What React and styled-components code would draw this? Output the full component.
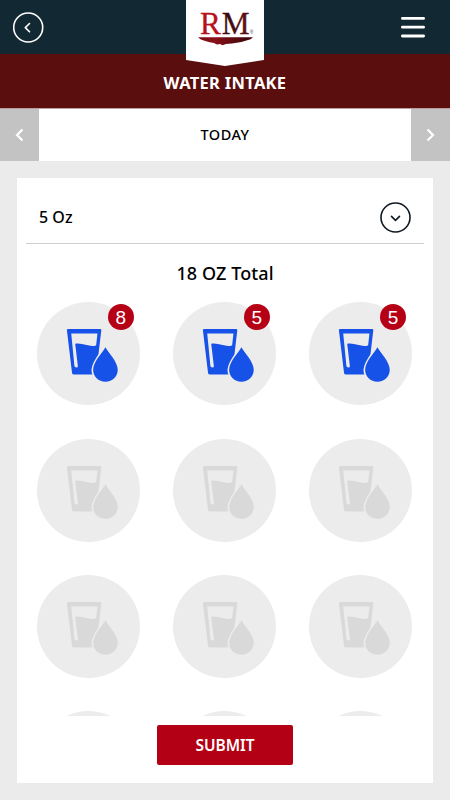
import React from 'react'
import styled, { createGlobalStyle } from 'styled-components'

const GlobalStyle = createGlobalStyle`
  * {
    box-sizing: border-box;
  }

  body {
    margin: 0;
    background: #ebebeb;
    color: #000;
    font-family: 'Noto Sans', 'Open Sans', sans-serif;
    overflow: hidden;
  }

  button {
    padding: 0;
    border: 0;
    background: none;
    font-family: inherit;
    color: inherit;
  }

  svg {
    display: block;
  }
`

const Screen = styled.div`
  display: flex;
  flex-direction: column;
  width: 450px;
  height: 800px;
`

const Header = styled.header`
  position: relative;
  display: flex;
  justify-content: space-between;
  align-items: center;
  height: 54px;
  padding: 0 25px 0 13px;
  background: #122832;
`

const LogoFlag = styled.div`
  position: absolute;
  top: 0;
  left: 186px;
`

const TitleBar = styled.h1`
  height: 54px;
  margin: 0;
  background: #5b0e0e;
  color: #fff;
  font-size: 16.5px;
  font-weight: 700;
  line-height: 57px;
  letter-spacing: 0.3px;
  text-align: center;
`

const DateBar = styled.div`
  display: flex;
  height: 53px;
  border-top: 1px solid #b99f9f;
  background: #fff;
`

const DateArrow = styled.button`
  display: flex;
  align-items: center;
  justify-content: center;
  width: 39px;
  background: #c3c3c3;
`

const DateLabel = styled.div`
  flex: 1;
  font-size: 14.5px;
  font-weight: 500;
  line-height: 51px;
  letter-spacing: 0.5px;
  text-align: center;
`

const Card = styled.main`
  display: flex;
  flex-direction: column;
  align-items: center;
  width: 415.5px;
  height: 604.5px;
  margin: 17px 0 0 17.3px;
  background: #fff;
`

const SizeSelect = styled.div`
  display: flex;
  align-items: center;
  justify-content: space-between;
  width: 398px;
  height: 66px;
  padding: 13px 13px 0 13px;
  border-bottom: 1.5px solid #d0d0d0;
  font-size: 16px;
  font-weight: 500;
`

const Total = styled.h2`
  margin: 0;
  height: 58.3px;
  font-size: 18px;
  font-weight: 500;
  line-height: 58px;
  letter-spacing: 0.1px;
`

const GlassGrid = styled.div`
  display: grid;
  grid-template-columns: repeat(3, 103px);
  grid-auto-rows: 103px;
  gap: 33.3px 33.1px;
  height: 413.7px;
  margin-right: 0.4px;
  overflow: hidden;
`

const GlassButton = styled.button`
  position: relative;
  width: 103px;
  height: 103px;
  border-radius: 50%;
  background: #ececec;
  color: ${props => (props.$filled ? '#1652e8' : '#d9d9d9')};
`

const Badge = styled.span`
  position: absolute;
  top: 2px;
  right: 6.5px;
  width: 26px;
  height: 26px;
  border-radius: 50%;
  background: #b50015;
  color: #fff;
  font-family: 'Liberation Sans', sans-serif;
  font-size: 19px;
  line-height: 27px;
  text-align: center;
`

const SubmitButton = styled.button`
  width: 136px;
  height: 40px;
  margin-top: 9px;
  border-radius: 2px;
  background: #b30014;
  color: #fff;
  font-size: 15.5px;
  font-weight: 600;
  line-height: 40px;
`

const Logo = () => (
  <svg width="78" height="67" viewBox="0 0 78 67">
    <defs>
      <linearGradient id="bowl" x1="0" x2="1">
        <stop offset="0" stopColor="#7a0d14" />
        <stop offset="0.3" stopColor="#8a1018" />
        <stop offset="1" stopColor="#35060a" />
      </linearGradient>
      <linearGradient id="letterM" x1="0" x2="1">
        <stop offset="0" stopColor="#30080b" />
        <stop offset="1" stopColor="#681219" />
      </linearGradient>
    </defs>
    <path d="M0 0H78V60L39 66L0 60Z" fill="#fff" />
    <text x="13.9" y="34" fontFamily="Liberation Serif" fontSize="30.5" textLength="20.8" lengthAdjust="spacingAndGlyphs" fill="#b8101a" stroke="#b8101a" strokeWidth="0.3">R</text>
    <text x="35.8" y="34" fontFamily="Liberation Serif" fontSize="30.5" textLength="27.8" lengthAdjust="spacingAndGlyphs" fill="url(#letterM)" stroke="#43090e" strokeWidth="0.3">M</text>
    <text x="64" y="34" fontFamily="Liberation Sans" fontSize="4.5" fill="#333">®</text>
    <path d="M12 37.3H67L64.5 39.2Q56 42.5 46 43.4L40 44L36.5 45.3L34 44L31 44.4L28 42.9Q19 41.5 14.5 39.2Z" fill="url(#bowl)" />
  </svg>
)

const Menu = () => (
  <svg width="24" height="22" viewBox="0 0 24 22" fill="none" stroke="#fff" strokeWidth="2.8" strokeLinecap="round">
    <path d="M1.4 2.4H22.6M1.4 11.2H22.6M1.4 20H22.6" />
  </svg>
)

const CircleBack = () => (
  <svg width="31" height="31" viewBox="0 0 31 31" fill="none" stroke="#fff" strokeLinecap="round" strokeLinejoin="round">
    <circle cx="15.2" cy="15.5" r="14.5" strokeWidth="1.6" />
    <path d="M16.5 11.5L12.3 15.6L16.5 19.8" strokeWidth="1.6" />
  </svg>
)

const CircleDown = () => (
  <svg width="31" height="31" viewBox="0 0 31 31" fill="none" stroke="#101820" strokeLinecap="round" strokeLinejoin="round">
    <circle cx="15.5" cy="15.5" r="14.5" strokeWidth="1.6" />
    <path d="M11.5 14.4L15.5 18.4L19.5 14.4" strokeWidth="1.6" />
  </svg>
)

const Chevron = ({ right }) => (
  <svg width="9" height="14" viewBox="0 0 9 14" fill="none" stroke="#fff" strokeWidth="2.2">
    <path d={right ? 'M1.5 1.5L7 7L1.5 12.5' : 'M7.5 1.5L2 7L7.5 12.5'} />
  </svg>
)

const GlassIcon = () => (
  <svg width="103" height="103" viewBox="0 0 310 310">
    <path fill="currentColor" d="M94 81H190Q194 81 193.5 85L178 218H110Q106 218 105.5 214L90 85Q89.500 81 94 81Z" />
    <path fill="#ececec" d="M103 95H182L178 130C162 139 137 121 115 126L123 193Q123 197 118.500 197Q113 197 112.500 192Z" />
    <path
      fill="currentColor"
      stroke="#ececec"
      strokeWidth="10"
      paintOrder="stroke"
      d="M206 136C197 152 169 180 169 204C169 225 185 240 206 240C227 240 243 225 243 204C243 180 215 152 206 136Z"
    />
  </svg>
)

const glasses = [8, 5, 5, 0, 0, 0, 0, 0, 0, 0, 0, 0]

const App = () => {
  const total = glasses.reduce((sum, oz) => sum + oz, 0)

  return (
    <Screen>
      <GlobalStyle />
      <Header>
        <button aria-label="Back"><CircleBack /></button>
        <LogoFlag><Logo /></LogoFlag>
        <button aria-label="Menu"><Menu /></button>
      </Header>
      <TitleBar>WATER INTAKE</TitleBar>
      <DateBar>
        <DateArrow aria-label="Previous day"><Chevron /></DateArrow>
        <DateLabel>TODAY</DateLabel>
        <DateArrow aria-label="Next day"><Chevron right /></DateArrow>
      </DateBar>
      <Card>
        <SizeSelect>
          <span>5 Oz</span>
          <CircleDown />
        </SizeSelect>
        <Total>{total} OZ Total</Total>
        <GlassGrid>
          {glasses.map((oz, i) => (
            <GlassButton key={i} $filled={oz > 0}>
              <GlassIcon />
              {oz > 0 && <Badge>{oz}</Badge>}
            </GlassButton>
          ))}
        </GlassGrid>
        <SubmitButton>SUBMIT</SubmitButton>
      </Card>
    </Screen>
  )
}

export default App
